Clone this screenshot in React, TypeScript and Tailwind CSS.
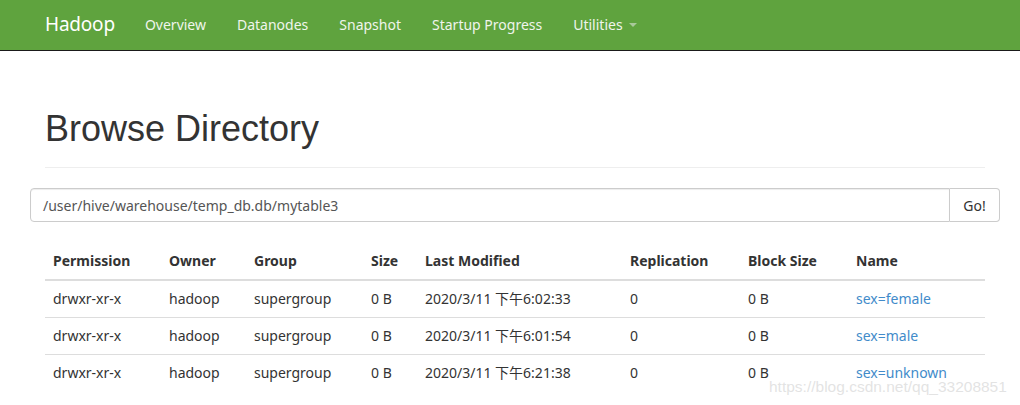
import React from "react";

const rows = [
  ["drwxr-xr-x", "hadoop", "supergroup", "0 B", "2020/3/11 下午6:02:33", "0", "0 B", "sex=female"],
  ["drwxr-xr-x", "hadoop", "supergroup", "0 B", "2020/3/11 下午6:01:54", "0", "0 B", "sex=male"],
  ["drwxr-xr-x", "hadoop", "supergroup", "0 B", "2020/3/11 下午6:21:38", "0", "0 B", "sex=unknown"],
];

const widths = ["w-[116px]", "w-[85px]", "w-[117px]", "w-[54px]", "w-[205px]", "w-[118px]", "w-[108px]", ""];
const heads = ["Permission", "Owner", "Group", "Size", "Last Modified", "Replication", "Block Size", "Name"];

export default function App() {
  return (
    <div className="relative min-h-[405px] overflow-hidden bg-white text-[#333] text-[14px] font-['Noto_Sans','Noto_Sans_CJK_SC',sans-serif]">
      <div className="h-[50px] bg-[#5fa33e] border-b border-[#1a1a1a] box-content -mb-px">
        <div className="flex items-center h-[49px] px-[45px] text-[#f0f5ec]">
          <span className="text-[19px] text-white mr-[30px] tracking-[-0.2px]">Hadoop</span>
          <div className="flex gap-[31px] text-[14px]">
            <span>Overview</span>
            <span>Datanodes</span>
            <span>Snapshot</span>
            <span>Startup Progress</span>
            <span className="flex items-center">
              Utilities
              <span className="ml-[6px] inline-block w-0 h-0 border-l-[4px] border-r-[4px] border-t-[4px] border-l-transparent border-r-transparent border-t-[#a9c99a]" />
            </span>
          </div>
        </div>
      </div>
      <div className="pl-[45px] pr-[35px]">
        <div className="pt-[59px] pb-[18px] border-b border-[#eee] mb-[20px]">
          <h1 className="text-[36px] leading-[40px] font-['Liberation_Sans',Arial,sans-serif] text-[#333]">Browse Directory</h1>
        </div>
        <div className="-mx-[15px] flex h-[34px]">
          <div className="flex-1 border border-[#ccc] rounded-l-[4px] flex items-center px-[12px] text-[#555] shadow-[inset_0_1px_1px_rgba(0,0,0,0.075)]">
            /user/hive/warehouse/temp_db.db/mytable3
          </div>
          <div className="w-[50px] border border-l-0 border-[#ccc] rounded-r-[4px] flex items-center justify-center text-[#333]">Go!</div>
        </div>
        <table className="w-full mt-[20px] border-collapse">
          <thead>
            <tr className="border-b-2 border-[#ddd]">
              {heads.map((h, i) => (
                <th key={i} className={`${widths[i]} text-left font-bold px-[8px] h-[38px] align-middle`}>{h}</th>
              ))}
            </tr>
          </thead>
          <tbody>
            {rows.map((r, ri) => (
              <tr key={ri} className={ri < rows.length - 1 ? "border-b border-[#ddd]" : ""}>
                {r.map((c, ci) => (
                  <td key={ci} className={`px-[8px] h-[37px] align-middle ${ci === 7 ? "text-[#428bca]" : ""}`}>{c}</td>
                ))}
              </tr>
            ))}
          </tbody>
        </table>
      </div>
      <div className="absolute left-[769px] top-[377px] text-[15.5px] leading-[20px] text-[#dcdcdc]/80 font-['Liberation_Sans',Arial,sans-serif] whitespace-nowrap">
        https://blog.csdn.net/qq_33208851
      </div>
    </div>
  );
}
